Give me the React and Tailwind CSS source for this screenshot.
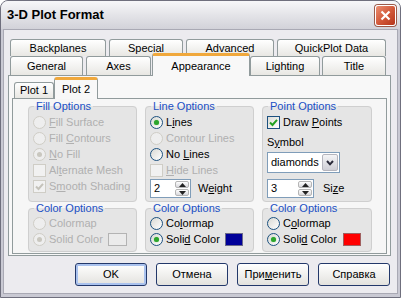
import React from "react";

const FONT = "font-['Liberation_Sans',Arial,sans-serif]";

function Radio({ checked, disabled }) {
  return (
    <span
      className={`w-[13px] h-[13px] rounded-full border flex items-center justify-center shrink-0 ${
        disabled
          ? "border-[#cfcdc6] bg-[#eeeeee]"
          : "border-[#1c5180] bg-gradient-to-br from-[#d9d9d4] to-white"
      }`}
    >
      {checked && (
        <span
          className={`w-[5px] h-[5px] rounded-full ${
            disabled ? "bg-[#c9c7bf]" : "bg-[#2ca52c] shadow-[0_0_1px_#63c463]"
          }`}
        />
      )}
    </span>
  );
}

function Check({ checked, disabled }) {
  return (
    <span
      className={`w-[13px] h-[13px] border flex items-center justify-center shrink-0 ${
        disabled
          ? "border-[#cfcdc6] bg-[#f1f1f1]"
          : "border-[#1c5180] bg-gradient-to-br from-[#dcdcd7] to-white"
      }`}
    >
      {checked && (
        <svg width="9" height="9" viewBox="0 0 9 9">
          <path
            d="M1 4.5 L3.5 7 L8 1.8"
            fill="none"
            stroke={disabled ? "#c4c2ba" : "#21a121"}
            strokeWidth="2"
          />
        </svg>
      )}
    </span>
  );
}

function Row({ children, disabled }) {
  return (
    <div
      className={`h-[16px] flex items-center gap-[3px] pl-[4px] whitespace-nowrap ${
        disabled ? "text-[#b0b0b0]" : "text-black"
      }`}
    >
      {children}
    </div>
  );
}

function Group({ title, className, children }) {
  return (
    <fieldset
      className={`border border-[#cfcfcf] rounded-[4px] bg-[#e5e5e5] ${className}`}
    >
      <legend className="ml-[5px] px-[2px] h-[13px] leading-[13px] text-[#1a4fc4]">
        {title}
      </legend>
      {children}
    </fieldset>
  );
}

function Spinner({ value, w }) {
  return (
    <div className="flex h-[19px] bg-white border border-[#7f9db9]">
      <div className={`${w} pl-[3px] leading-[17px]`}>{value}</div>
      <div className="w-[15px] flex flex-col gap-[1px] p-[1px] pl-0">
        <span className="flex-1 rounded-[2px] border border-[#b5b5b5] bg-gradient-to-b from-white to-[#d8d8dc] flex items-center justify-center">
          <svg width="7" height="4" viewBox="0 0 7 4">
            <path d="M0 4 L3.5 0 L7 4 Z" fill="#222" />
          </svg>
        </span>
        <span className="flex-1 rounded-[2px] border border-[#b5b5b5] bg-gradient-to-b from-white to-[#d8d8dc] flex items-center justify-center">
          <svg width="7" height="4" viewBox="0 0 7 4">
            <path d="M0 0 L3.5 4 L7 0 Z" fill="#222" />
          </svg>
        </span>
      </div>
    </div>
  );
}

function Tab({ w, ml, selected, children }) {
  if (selected) {
    return (
      <div
        className={`${w} ${ml} relative z-10 h-[23px] -mt-[3px] -mb-px bg-[#f8f8f8] border-x border-[#919b9c] border-t-[3px] border-t-[#f0a83c] rounded-t-[3px] flex items-center justify-center`}
      >
        {children}
      </div>
    );
  }
  return (
    <div
      className={`${w} ${ml} h-full bg-gradient-to-b from-white to-[#e8e7e3] border border-b-0 border-[#919b9c] rounded-t-[3px] flex items-center justify-center`}
    >
      {children}
    </div>
  );
}

function DlgButton({ children, def }) {
  return (
    <button
      className={`w-[72px] h-[23px] rounded-[3px] border border-[#23386a] bg-gradient-to-b from-white to-[#e3e2de] text-black ${
        def ? "shadow-[inset_0_0_0_2px_#aac2ee]" : ""
      }`}
    >
      {children}
    </button>
  );
}

export default function App() {
  return (
    <div
      className={`${FONT} text-[11px] w-[401px] h-[298px] flex flex-col bg-[#c9c9d3] border border-[#6f6f7d] rounded-t-[8px] overflow-hidden`}
    >
      {/* title bar */}
      <div className="h-[28px] shrink-0 flex items-center justify-between pl-[6px] pr-[4px] bg-gradient-to-b from-[#f7f7f9] via-[#e4e4e8] to-[#d2d2d9]">
        <span className="text-[13px] font-bold text-black">3-D Plot Format</span>
        <span className="w-[21px] h-[21px] rounded-[3px] border border-white bg-gradient-to-br from-[#ea8f72] via-[#d35a3b] to-[#b5341a] flex items-center justify-center shadow-[0_0_0_1px_#9b5a4a]">
          <svg width="11" height="11" viewBox="0 0 11 11">
            <path d="M1.5 1.5 L9.5 9.5 M9.5 1.5 L1.5 9.5" stroke="white" strokeWidth="2.2" />
          </svg>
        </span>
      </div>

      {/* body */}
      <div className="flex-1 mx-[2px] mb-[3px] bg-[#ecebef] border border-[#a9a9b4] pt-[9px] pl-[4px] pr-[4px]">
        {/* tab rows */}
        <div className="pl-[2px] h-[36px] flex flex-col">
          <div className="flex h-[17px]">
            <Tab w="w-[96px]">Backplanes</Tab>
            <Tab w="w-[74px]" ml="ml-[3px]">Special</Tab>
            <Tab w="w-[88px]" ml="ml-[3px]">Advanced</Tab>
            <Tab w="w-[109px]" ml="ml-[3px]">QuickPlot Data</Tab>
          </div>
          <div className="flex h-[19px]">
            <Tab w="w-[73px]">General</Tab>
            <Tab w="w-[65px]" ml="ml-[3px]">Axes</Tab>
            <Tab w="w-[98px]" ml="ml-[1px]" selected>
              Appearance
            </Tab>
            <Tab w="w-[70px]" ml="ml-[0px]">Lighting</Tab>
            <Tab w="w-[64px]" ml="ml-[2px]">Title</Tab>
          </div>
        </div>

        {/* main tab panel */}
        <div className="w-[383px] h-[181px] bg-[#f8f8f8] border border-[#919b9c] pt-[1px] pl-[3px]">
          <div className="flex items-end h-[21px] pl-[2px]">
            <div className="w-[40px] h-[16px] bg-gradient-to-b from-white to-[#e8e7e3] border border-b-0 border-[#919b9c] rounded-t-[3px] flex items-center justify-center">
              Plot 1
            </div>
            <div className="w-[44px] h-[22px] -mb-px relative z-10 bg-[#f8f8f8] border-x border-[#919b9c] border-t-[3px] border-t-[#f0a83c] rounded-t-[3px] flex items-center justify-center">
              Plot 2
            </div>
          </div>
          <div className="w-[375px] h-[156px] border border-[#919b9c] bg-[#f6f6f6] pl-[15px] pt-[1px] flex gap-[8px]">
            {/* column 1 */}
            <div className="w-[109px] flex flex-col">
              <Group title="Fill Options" className="h-[102px]">
                <div className="pt-[1px]">
                  <Row disabled>
                    <Radio disabled />
                    <span><u>F</u>ill Surface</span>
                  </Row>
                  <Row disabled>
                    <Radio disabled />
                    <span>Fill <u>C</u>ontours</span>
                  </Row>
                  <Row disabled>
                    <Radio disabled checked />
                    <span><u>N</u>o Fill</span>
                  </Row>
                  <Row disabled>
                    <Check disabled />
                    <span>Al<u>t</u>ernate Mesh</span>
                  </Row>
                  <Row disabled>
                    <Check disabled checked />
                    <span>S<u>m</u>ooth Shading</span>
                  </Row>
                </div>
              </Group>
              <Group title="Color Options" className="h-[50px]">
                <Row disabled>
                  <Radio disabled />
                  <span>Colormap</span>
                </Row>
                <Row disabled>
                  <Radio disabled checked />
                  <span>Solid Color</span>
                  <span className="ml-auto mr-[9px] w-[19px] h-[13px] border border-[#b3b3b3] bg-[#ebebeb]" />
                </Row>
              </Group>
            </div>

            {/* column 2 */}
            <div className="w-[109px] flex flex-col">
              <Group title="Line Options" className="h-[102px]">
                <div className="pt-[1px]">
                  <Row>
                    <Radio checked />
                    <span>L<u>i</u>nes</span>
                  </Row>
                  <Row disabled>
                    <Radio disabled />
                    <span>Contour Lines</span>
                  </Row>
                  <Row>
                    <Radio />
                    <span>No <u>L</u>ines</span>
                  </Row>
                  <Row disabled>
                    <Check disabled />
                    <span><u>H</u>ide Lines</span>
                  </Row>
                  <div className="flex items-center gap-[7px] pl-[4px] pt-[1px]">
                    <Spinner value="2" w="w-[24px]" />
                    <span>W<u>e</u>ight</span>
                  </div>
                </div>
              </Group>
              <Group title="Color Options" className="h-[50px]">
                <Row>
                  <Radio />
                  <span>Co<u>l</u>ormap</span>
                </Row>
                <Row>
                  <Radio checked />
                  <span>Soli<u>d</u> Color</span>
                  <span className="ml-auto mr-[10px] w-[18px] h-[13px] border border-[#6b6b8a] bg-[#000099]" />
                </Row>
              </Group>
            </div>

            {/* column 3 */}
            <div className="w-[110px] flex flex-col">
              <Group title="Point Options" className="h-[102px]">
                <div className="pt-[1px] pl-[0px]">
                  <Row>
                    <Check checked />
                    <span>Draw <u>P</u>oints</span>
                  </Row>
                  <div className="h-[19px] pl-[4px] flex items-end leading-[13px]">
                    <span>S<u>y</u>mbol</span>
                  </div>
                  <div className="pl-[4px] pt-[3px]">
                    <div className="w-[73px] h-[21px] bg-white border border-[#7f9db9] flex items-center">
                      <span className="flex-1 pl-[3px]">diamonds</span>
                      <span className="w-[16px] h-[17px] mr-[1px] rounded-[2px] border border-[#b5b5bd] bg-gradient-to-b from-[#f4f4f6] to-[#cfcfd6] flex items-center justify-center">
                        <svg width="8" height="6" viewBox="0 0 8 6">
                          <path d="M1 1 L4 4.3 L7 1" fill="none" stroke="#2a2a3a" strokeWidth="2" />
                        </svg>
                      </span>
                    </div>
                  </div>
                  <div className="flex items-center gap-[9px] pl-[4px] pt-[6px]">
                    <Spinner value="3" w="w-[30px]" />
                    <span>Si<u>z</u>e</span>
                  </div>
                </div>
              </Group>
              <Group title="Color Options" className="h-[50px]">
                <Row>
                  <Radio />
                  <span>C<u>o</u>lormap</span>
                </Row>
                <Row>
                  <Radio checked />
                  <span>Soli<u>d</u> Color</span>
                  <span className="ml-auto mr-[10px] w-[18px] h-[13px] border border-[#a06060] bg-[#ff0000]" />
                </Row>
              </Group>
            </div>
          </div>
        </div>

        {/* buttons */}
        <div className="flex justify-end gap-[9px] pr-[3px] mt-[7px]">
          <DlgButton def>OK</DlgButton>
          <DlgButton>Отмена</DlgButton>
          <DlgButton>
            При<u>м</u>енить
          </DlgButton>
          <DlgButton>Справка</DlgButton>
        </div>
      </div>
    </div>
  );
}
